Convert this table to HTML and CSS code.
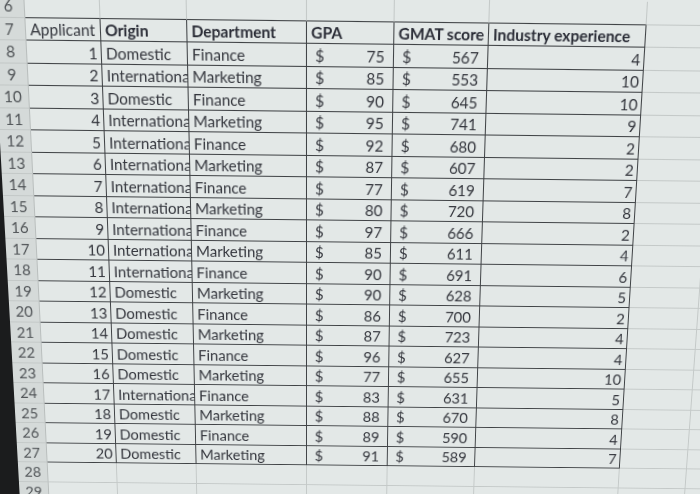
FILE: index.html
```html
<!DOCTYPE html>
<html>
<head>
<meta charset="utf-8">
<link rel="stylesheet" href="styles.css">
</head>
<body>
<div class="screen">
  <div class="sheet">
    <div class="row"><div class="rh">6</div><div class="c tb"></div><div class="c tb"></div><div class="c tb"></div><div class="c tb"></div><div class="c tb"></div><div class="c tb"></div><div class="c"></div><div class="c"></div></div>
    <div class="row"><div class="rh">7</div><div class="c t">Applicant</div><div class="c t b">Origin</div><div class="c t b">Department</div><div class="c t b">GPA</div><div class="c t b">GMAT score</div><div class="c t b">Industry experience</div><div class="c"></div><div class="c"></div></div>
    <div class="row"><div class="rh">8</div><div class="c t n">1</div><div class="c t">Domestic</div><div class="c t">Finance</div><div class="c t acc"><span>$</span><span>75</span></div><div class="c t acc"><span>$</span><span>567</span></div><div class="c t n">4</div><div class="c"></div><div class="c"></div></div>
    <div class="row"><div class="rh">9</div><div class="c t n">2</div><div class="c t">International</div><div class="c t">Marketing</div><div class="c t acc"><span>$</span><span>85</span></div><div class="c t acc"><span>$</span><span>553</span></div><div class="c t n">10</div><div class="c"></div><div class="c"></div></div>
    <div class="row"><div class="rh">10</div><div class="c t n">3</div><div class="c t">Domestic</div><div class="c t">Finance</div><div class="c t acc"><span>$</span><span>90</span></div><div class="c t acc"><span>$</span><span>645</span></div><div class="c t n">10</div><div class="c"></div><div class="c"></div></div>
    <div class="row"><div class="rh">11</div><div class="c t n">4</div><div class="c t">International</div><div class="c t">Marketing</div><div class="c t acc"><span>$</span><span>95</span></div><div class="c t acc"><span>$</span><span>741</span></div><div class="c t n">9</div><div class="c"></div><div class="c"></div></div>
    <div class="row"><div class="rh">12</div><div class="c t n">5</div><div class="c t">International</div><div class="c t">Finance</div><div class="c t acc"><span>$</span><span>92</span></div><div class="c t acc"><span>$</span><span>680</span></div><div class="c t n">2</div><div class="c"></div><div class="c"></div></div>
    <div class="row"><div class="rh">13</div><div class="c t n">6</div><div class="c t">International</div><div class="c t">Marketing</div><div class="c t acc"><span>$</span><span>87</span></div><div class="c t acc"><span>$</span><span>607</span></div><div class="c t n">2</div><div class="c"></div><div class="c"></div></div>
    <div class="row"><div class="rh">14</div><div class="c t n">7</div><div class="c t">International</div><div class="c t">Finance</div><div class="c t acc"><span>$</span><span>77</span></div><div class="c t acc"><span>$</span><span>619</span></div><div class="c t n">7</div><div class="c"></div><div class="c"></div></div>
    <div class="row"><div class="rh">15</div><div class="c t n">8</div><div class="c t">International</div><div class="c t">Marketing</div><div class="c t acc"><span>$</span><span>80</span></div><div class="c t acc"><span>$</span><span>720</span></div><div class="c t n">8</div><div class="c"></div><div class="c"></div></div>
    <div class="row"><div class="rh">16</div><div class="c t n">9</div><div class="c t">International</div><div class="c t">Finance</div><div class="c t acc"><span>$</span><span>97</span></div><div class="c t acc"><span>$</span><span>666</span></div><div class="c t n">2</div><div class="c"></div><div class="c"></div></div>
    <div class="row"><div class="rh">17</div><div class="c t n">10</div><div class="c t">International</div><div class="c t">Marketing</div><div class="c t acc"><span>$</span><span>85</span></div><div class="c t acc"><span>$</span><span>611</span></div><div class="c t n">4</div><div class="c"></div><div class="c"></div></div>
    <div class="row"><div class="rh">18</div><div class="c t n">11</div><div class="c t">International</div><div class="c t">Finance</div><div class="c t acc"><span>$</span><span>90</span></div><div class="c t acc"><span>$</span><span>691</span></div><div class="c t n">6</div><div class="c"></div><div class="c"></div></div>
    <div class="row"><div class="rh">19</div><div class="c t n">12</div><div class="c t">Domestic</div><div class="c t">Marketing</div><div class="c t acc"><span>$</span><span>90</span></div><div class="c t acc"><span>$</span><span>628</span></div><div class="c t n">5</div><div class="c"></div><div class="c"></div></div>
    <div class="row"><div class="rh">20</div><div class="c t n">13</div><div class="c t">Domestic</div><div class="c t">Finance</div><div class="c t acc"><span>$</span><span>86</span></div><div class="c t acc"><span>$</span><span>700</span></div><div class="c t n">2</div><div class="c"></div><div class="c"></div></div>
    <div class="row"><div class="rh">21</div><div class="c t n">14</div><div class="c t">Domestic</div><div class="c t">Marketing</div><div class="c t acc"><span>$</span><span>87</span></div><div class="c t acc"><span>$</span><span>723</span></div><div class="c t n">4</div><div class="c"></div><div class="c"></div></div>
    <div class="row"><div class="rh">22</div><div class="c t n">15</div><div class="c t">Domestic</div><div class="c t">Finance</div><div class="c t acc"><span>$</span><span>96</span></div><div class="c t acc"><span>$</span><span>627</span></div><div class="c t n">4</div><div class="c"></div><div class="c"></div></div>
    <div class="row"><div class="rh">23</div><div class="c t n">16</div><div class="c t">Domestic</div><div class="c t">Marketing</div><div class="c t acc"><span>$</span><span>77</span></div><div class="c t acc"><span>$</span><span>655</span></div><div class="c t n">10</div><div class="c"></div><div class="c"></div></div>
    <div class="row"><div class="rh">24</div><div class="c t n">17</div><div class="c t">International</div><div class="c t">Finance</div><div class="c t acc"><span>$</span><span>83</span></div><div class="c t acc"><span>$</span><span>631</span></div><div class="c t n">5</div><div class="c"></div><div class="c"></div></div>
    <div class="row"><div class="rh">25</div><div class="c t n">18</div><div class="c t">Domestic</div><div class="c t">Marketing</div><div class="c t acc"><span>$</span><span>88</span></div><div class="c t acc"><span>$</span><span>670</span></div><div class="c t n">8</div><div class="c"></div><div class="c"></div></div>
    <div class="row"><div class="rh">26</div><div class="c t n">19</div><div class="c t">Domestic</div><div class="c t">Finance</div><div class="c t acc"><span>$</span><span>89</span></div><div class="c t acc"><span>$</span><span>590</span></div><div class="c t n">4</div><div class="c"></div><div class="c"></div></div>
    <div class="row"><div class="rh">27</div><div class="c t n">20</div><div class="c t">Domestic</div><div class="c t">Marketing</div><div class="c t acc"><span>$</span><span>91</span></div><div class="c t acc"><span>$</span><span>589</span></div><div class="c t n">7</div><div class="c"></div><div class="c"></div></div>
    <div class="row"><div class="rh">28</div><div class="c"></div><div class="c"></div><div class="c"></div><div class="c"></div><div class="c"></div><div class="c"></div><div class="c"></div><div class="c"></div></div>
    <div class="row"><div class="rh">29</div><div class="c"></div><div class="c"></div><div class="c"></div><div class="c"></div><div class="c"></div><div class="c"></div><div class="c"></div><div class="c"></div></div>
    <div class="row"><div class="rh">30</div><div class="c"></div><div class="c"></div><div class="c"></div><div class="c"></div><div class="c"></div><div class="c"></div><div class="c"></div><div class="c"></div></div>
  </div>
</div>
</body>
</html>
```
FILE: styles.css
```css
html, body {
  margin: 0;
  padding: 0;
  background: #e3e8e7;
  overflow: hidden;
}
.screen {
  width: 700px;
  height: 494px;
  overflow: hidden;
  background: #e3e8e7;
}
.sheet {
  margin-left: -34px;
  padding-top: 5px;
  width: 840px;
  border-left: 40px solid #1b1c1d;
  background: #e3e8e7;
  font-family: Lato, "Open Sans", sans-serif;
  font-size: 15px;
  color: #34363d;
  transform-origin: 341px 250px;
  transform: perspective(1000px) rotateX(-10.5deg) skewY(0.65deg);
}
.row {
  display: grid;
  grid-template-columns: 31px 72px 83px 115px 84px 91px 151px 70px 143px;
  height: 21.5px;
}
.rh {
  background: #d5dad9;
  border-right: 1px solid #b9bebd;
  border-bottom: 1px solid #c3c8c7;
  color: #505457;
  display: flex;
  align-items: center;
  justify-content: center;
  box-sizing: border-box;
}
.c {
  box-sizing: border-box;
  border-right: 1px solid #c4c9c8;
  border-bottom: 1px solid #c4c9c8;
  padding: 0 3px 1px 4px;
  display: flex;
  align-items: flex-end;
  overflow: hidden;
  white-space: nowrap;
  line-height: 18px;
}
.c.t {
  border-right-color: #3f4245;
  border-bottom-color: #3f4245;
}
.c.tb {
  border-bottom-color: #3f4245;
}
.c.b {
  font-weight: 700;
  color: #2a2c36;
}
.c.n {
  justify-content: flex-end;
  padding-right: 3px;
}
.c.acc {
  justify-content: space-between;
  padding: 0 8px 1px 8px;
}
```
